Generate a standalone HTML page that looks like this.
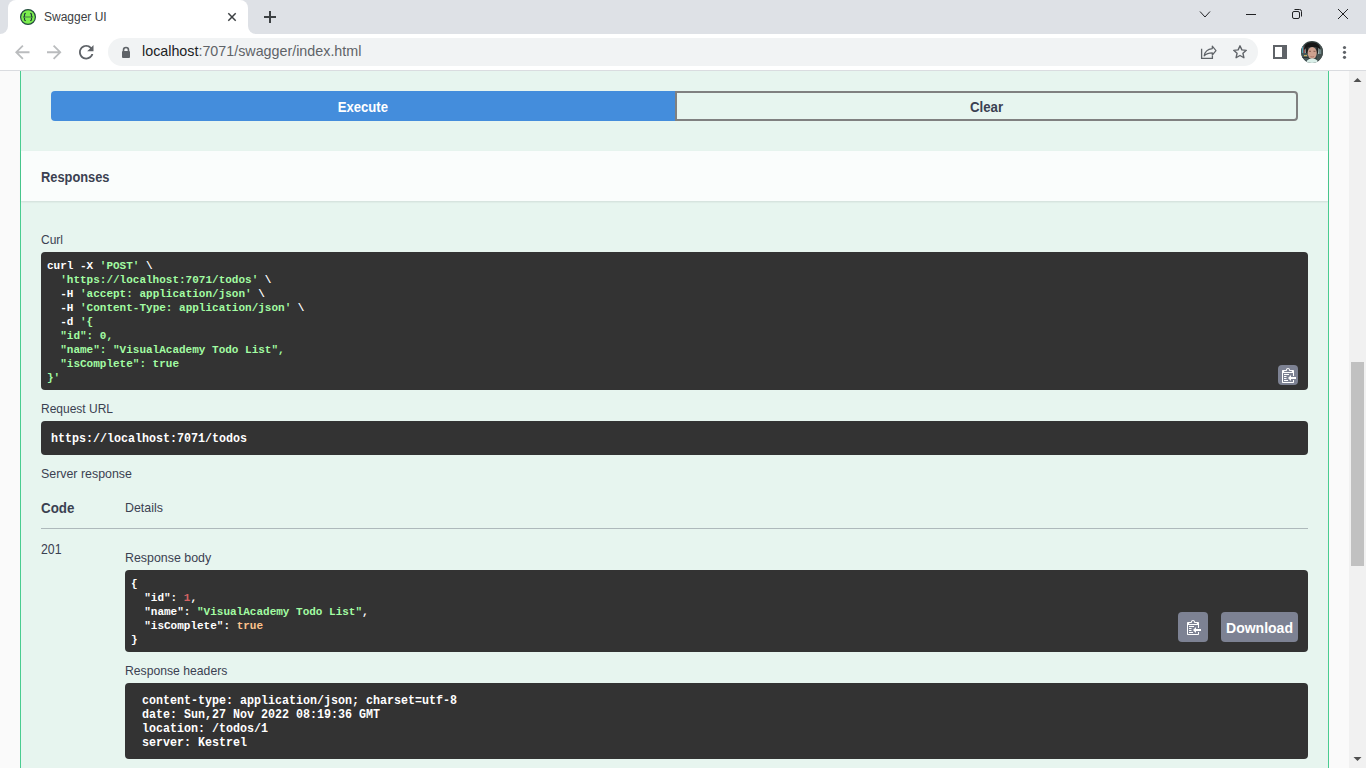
<!DOCTYPE html>
<html><head><meta charset="utf-8"><title>Swagger UI</title>
<style>
*{box-sizing:border-box;margin:0;padding:0}
html,body{width:1366px;height:768px;overflow:hidden;background:#fff;font-family:"Liberation Sans",sans-serif}
.a{position:absolute}
#tabstrip{left:0;top:0;width:1366px;height:34px;background:#dee1e6}
#tab{left:8px;top:0;width:240px;height:34px;background:#fff;border-radius:8px 8px 0 0}
.cc{width:8px;height:8px;top:26px;background:#fff}
.cc i{position:absolute;left:0;top:0;width:8px;height:8px;background:#dee1e6}
#toolbar{left:0;top:34px;width:1366px;height:36px;background:#fff}
#tbline{left:0;top:70px;width:1366px;height:1px;background:#dadce0}
#omni{left:108px;top:38px;width:1150px;height:28px;border-radius:14px;background:#f1f3f4}
#url{left:142px;top:43px;font-size:14.3px;line-height:17px;color:#5f6368;white-space:pre}
#url b{font-weight:normal;color:#202124}
#view{left:0;top:71px;width:1349px;height:697px;background:#fafafa;overflow:hidden}
#sbar{left:1349px;top:71px;width:17px;height:697px;background:#f1f1f1}
#thumb{left:1351px;top:362px;width:13px;height:204px;background:#c1c1c1}
#opblock{left:20px;top:-20px;width:1309px;height:800px;border:1px solid #49cc90;background:rgba(73,204,144,.1)}
.t{color:#3b4151;white-space:pre;line-height:1}
.btn{height:30px;font-weight:bold;font-size:14px;text-align:center;line-height:30px}
pre.code{background:#333;border-radius:4px;color:#fff;font-family:"Liberation Mono",monospace;font-weight:bold;white-space:pre;overflow:hidden}
.gul span{display:inline-block;transform:scaleX(.864);transform-origin:0 0}
.s{color:#a2fca2}.n{color:#d36363}.l{color:#fcc28c}
.lbl{font-size:14px;font-weight:bold;line-height:1;text-align:center;white-space:pre}.lbl span{display:inline-block}
.copy{background:#7d8293;border-radius:4px}
</style></head><body>
<!-- browser chrome -->
<div id="tabstrip" class="a"></div>
<div id="tab" class="a"></div>
<div class="a cc" style="left:0"><i style="border-bottom-right-radius:8px"></i></div>
<div class="a cc" style="left:248px"><i style="border-bottom-left-radius:8px"></i></div>
<svg class="a" style="left:20px;top:9px" width="16" height="16" viewBox="0 0 16 16"><circle cx="8" cy="8" r="7.4" fill="#7cee4e" stroke="#234a3f" stroke-width="1.2"/><path d="M5 8H11" stroke="#5aa84a" stroke-width="1.7"/><path d="M5.8 4.3C4.8 4.3 4.5 4.8 4.5 5.6V7C4.5 7.6 4.1 7.9 3.4 8 4.1 8.1 4.5 8.4 4.5 9V10.4C4.5 11.2 4.8 11.6 5.8 11.6M10.2 4.3C11.2 4.3 11.5 4.8 11.5 5.6V7C11.5 7.6 11.9 7.9 12.6 8 11.9 8.1 11.5 8.4 11.5 9V10.4C11.5 11.2 11.2 11.6 10.2 11.6" fill="none" stroke="#1f3f3a" stroke-width="1.2"/></svg>
<div class="a" style="left:44px;top:10px;font-size:12px;line-height:14px;color:#3c4043;white-space:pre">Swagger UI</div>
<svg class="a" style="left:227px;top:12px" width="10" height="10" viewBox="0 0 10 10"><path d="M1.3 1.3L8.7 8.7M8.7 1.3L1.3 8.7" stroke="#3c4043" stroke-width="1.5"/></svg>
<svg class="a" style="left:263px;top:10px" width="14" height="14" viewBox="0 0 14 14"><path d="M7 1v12M1 7h12" stroke="#3c4043" stroke-width="2"/></svg>
<svg class="a" style="left:1199px;top:10px" width="12" height="9" viewBox="0 0 12 9"><path d="M1 1.5l5 5.5 5-5.5" fill="none" stroke="#202124" stroke-width="1"/></svg>
<svg class="a" style="left:1245px;top:9px" width="12" height="10"><path d="M1 5.5h10" stroke="#202124" stroke-width="1"/></svg>
<svg class="a" style="left:1291px;top:8px" width="12" height="12" viewBox="0 0 12 12"><rect x="1.5" y="3.5" width="7" height="7" rx="1.5" fill="none" stroke="#202124"/><path d="M3.5 1.5h5a2 2 0 0 1 2 2v5" fill="none" stroke="#202124"/></svg>
<svg class="a" style="left:1337px;top:8px" width="12" height="12" viewBox="0 0 12 12"><path d="M1 1l10 10M11 1L1 11" stroke="#202124" stroke-width="1"/></svg>
<div id="toolbar" class="a"></div>
<svg class="a" style="left:15px;top:45px" width="14.5" height="14.5" viewBox="4 4 16 16"><path d="M20 11H7.83l5.59-5.59L12 4l-8 8 8 8 1.41-1.41L7.83 13H20v-2z" fill="#babcbe"/></svg>
<svg class="a" style="left:47px;top:45px" width="14.5" height="14.5" viewBox="4 4 16 16"><path d="M4 11h12.17l-5.59-5.59L12 4l8 8-8 8-1.41-1.41L16.17 13H4v-2z" fill="#babcbe"/></svg>
<svg class="a" style="left:79px;top:45px" width="14.5" height="14.5" viewBox="4 4 16 16"><path d="M17.65 6.35C16.2 4.9 14.21 4 12 4c-4.42 0-7.99 3.58-7.99 8s3.57 8 7.99 8c3.73 0 6.84-2.55 7.730-6h-2.08c-.82 2.33-3.04 4-5.65 4-3.310 0-6-2.69-6-6s2.69-6 6-6c1.66 0 3.14.69 4.22 1.78L13 11h7V4l-2.35 2.35z" fill="#5f6368"/></svg>
<div id="omni" class="a"></div>
<svg class="a" style="left:121px;top:46px" width="10" height="13" viewBox="0 0 10 13"><path d="M2.5 5.5V4a2.5 2.5 0 0 1 5 0v1.5" fill="none" stroke="#5f6368" stroke-width="1.6"/><rect x="1" y="5" width="8" height="7" rx="1" fill="#5f6368"/></svg>
<div id="url" class="a"><b>localhost</b>:7071/swagger/index.html</div>
<svg class="a" style="left:1200px;top:45px" width="17" height="15" viewBox="0 0 17 15"><path d="M1.6 3.8V13.4H12.4V10.8" fill="none" stroke="#5f6368" stroke-width="1.3"/><path d="M12.3 1.2L16 5.6 12.3 10V7.8C8.6 7.8 6.2 8.8 4.2 10.8 4.8 6.8 7.6 4.2 12.3 3.6z" fill="none" stroke="#5f6368" stroke-width="1.2" stroke-linejoin="round"/></svg>
<svg class="a" style="left:1232px;top:44px" width="16" height="16" viewBox="0 0 16 16"><path d="M8 1.8l1.85 4.1 4.45.45-3.35 3 .95 4.4L8 11.5l-3.9 2.25.95-4.4-3.35-3 4.45-.45z" fill="none" stroke="#5f6368" stroke-width="1.4" stroke-linejoin="round"/></svg>
<svg class="a" style="left:1273px;top:45px" width="14" height="14" viewBox="0 0 14 14"><rect x="1" y="1" width="12" height="12" fill="none" stroke="#5f6368" stroke-width="2"/><rect x="9" y="1" width="4" height="12" fill="#5f6368"/></svg>
<svg class="a" style="left:1301px;top:41px" width="22" height="22" viewBox="0 0 22 22"><defs><clipPath id="cp"><circle cx="11" cy="11" r="11"/></clipPath></defs><g clip-path="url(#cp)"><rect width="22" height="22" fill="#34403f"/><rect x="0" y="5" width="7" height="17" fill="#46575a"/><rect x="1" y="6" width="1.2" height="6" fill="#4aa6b5"/><rect x="2.6" y="6" width="1.2" height="6" fill="#b05050"/><rect x="4.2" y="7" width="1.2" height="5" fill="#9ab8b8"/><rect x="3" y="14" width="3" height="1.2" fill="#c8b060"/><rect x="0" y="16" width="7" height="1" fill="#2a3030"/><rect x="16" y="5" width="6" height="17" fill="#45504f"/><rect x="17" y="7" width="1.5" height="6" fill="#9fb5b5"/><rect x="19" y="8" width="1.2" height="5" fill="#6d8585"/><path d="M3 9C3 3 7 1.5 11 1.5S19 3 19.5 9C18 6.5 16 6 11 6S5 7 3 9z" fill="#161616"/><path d="M4.5 6.5L7 5.5 7 13 5 12zM17.5 6.5L15.5 5.5 15.5 13 17 12z" fill="#1e1e1e"/><ellipse cx="11.2" cy="12" rx="4.6" ry="6" fill="#cfa18f"/><path d="M8 10.3h2M12.5 10.3h2" stroke="#7a5548" stroke-width=".9"/><path d="M9.5 15.5q1.7 1 3.4 0" stroke="#a06a60" stroke-width=".8" fill="none"/><path d="M5 22c1-3.5 3.5-4.5 6.2-4.5s5.2 1 6.3 4.5z" fill="#d9eee8"/></g></svg>
<svg class="a" style="left:1342px;top:45px" width="5" height="15" viewBox="0 0 5 15"><circle cx="2.5" cy="2.5" r="1.6" fill="#5f6368"/><circle cx="2.5" cy="7.3" r="1.6" fill="#5f6368"/><circle cx="2.5" cy="12.3" r="1.6" fill="#5f6368"/></svg>
<div id="tbline" class="a"></div>

<!-- page viewport -->
<div id="view" class="a">
 <div id="opblock" class="a"></div>
</div>

<!-- page content -->
<div class="a" style="left:51px;top:91px;width:624px;height:30px;background:#448ddc;border-radius:4px 0 0 4px"></div><div class="a lbl" style="left:51px;top:100px;width:624px;color:#fff"><span style="transform:scaleX(.937)">Execute</span></div>
<div class="a" style="left:675px;top:91px;width:623px;height:30px;border:2px solid #808080;border-radius:0 4px 4px 0"></div><div class="a lbl" style="left:675px;top:100px;width:623px;color:#3b4151"><span style="transform:scaleX(.946)">Clear</span></div>
<div class="a" style="left:21px;top:151px;width:1307px;height:50px;background:rgba(255,255,255,.8);box-shadow:0 1px 2px rgba(0,0,0,.1)"></div>
<div class="a t" style="left:41px;top:170px;font-size:14px;font-weight:bold;transform:scaleX(.917);transform-origin:0 0">Responses</div>
<div class="a t" style="left:41px;top:234px;font-size:12px">Curl</div>
<pre class="a code" style="left:41px;top:252px;width:1267px;height:138px;padding:7px 6px 5px;font-size:11px;line-height:14px">curl -X <span class="s">'POST'</span> \
  <span class="s">'https://localhost:7071/todos'</span> \
  -H <span class="s">'accept: application/json'</span> \
  -H <span class="s">'Content-Type: application/json'</span> \
  -d <span class="s">'{
  "id": 0,
  "name": "VisualAcademy Todo List",
  "isComplete": true
}'</span></pre>
<div class="a copy" style="left:1278px;top:365px;width:20px;height:20px"><svg class="a" style="left:2px;top:3px" width="16" height="15" viewBox="0 0 16 15"><g transform="translate(2 -1)"><path fill="#fff" fill-rule="evenodd" d="M2 13h4v1H2v-1zm5-6H2v1h5V7zm2 3V8l-3 3 3 3v-2h5v-2H9zM4.5 9H2v1h2.5V9zM2 12h2.5v-1H2v1zm9 1h1v2c-.02.28-.11.52-.3.7-.19.18-.42.28-.7.3H1c-.55 0-1-.45-1-1V4c0-.55.45-1 1-1h3c0-1.110.89-2 2-2 1.11 0 2 .89 2 2h3c.55 0 1 .45 1 1v5h-1V6H1v9h10v-2zM2 5h8c0-.55-.45-1-1-1H8c-.55 0-1-.45-1-1s-.45-1-1-1-1 .45-1 1-.45 1-1 1H3c-.55 0-1 .45-1 1z"/></g></svg></div>
<div class="a t" style="left:41px;top:403px;font-size:12px">Request URL</div>
<pre class="a code gul" style="left:41px;top:421px;width:1267px;height:34px;padding:11px 10px 9px;font-size:13.5px;line-height:14px"><span>https://localhost:7071/todos</span></pre>
<div class="a t" style="left:41px;top:468px;font-size:12.4px">Server response</div>
<div class="a t" style="left:41px;top:501px;font-size:14px;font-weight:bold;transform:scaleX(.954);transform-origin:0 0">Code</div>
<div class="a t" style="left:125px;top:502px;font-size:12.4px">Details</div>
<div class="a" style="left:41px;top:528px;width:1267px;height:1px;background:rgba(59,65,81,.33)"></div>
<div class="a t" style="left:41px;top:542px;font-size:14px;transform:scaleX(.88);transform-origin:0 0">201</div>
<div class="a t" style="left:125px;top:552px;font-size:12.4px">Response body</div>
<pre class="a code" style="left:125px;top:570px;width:1183px;height:82px;padding:7px 6px 5px;font-size:11px;line-height:14px">{
  "id": <span class="n">1</span>,
  "name": <span class="s">"VisualAcademy Todo List"</span>,
  "isComplete": <span class="l">true</span>
}</pre>
<div class="a copy" style="left:1178px;top:612px;width:30px;height:30px"><svg class="a" style="left:7px;top:8px" width="16" height="15" viewBox="0 0 16 15"><g transform="translate(2 -1)"><path fill="#fff" fill-rule="evenodd" d="M2 13h4v1H2v-1zm5-6H2v1h5V7zm2 3V8l-3 3 3 3v-2h5v-2H9zM4.5 9H2v1h2.5V9zM2 12h2.5v-1H2v1zm9 1h1v2c-.02.28-.11.52-.3.7-.19.18-.42.28-.7.3H1c-.55 0-1-.45-1-1V4c0-.55.45-1 1-1h3c0-1.110.89-2 2-2 1.11 0 2 .89 2 2h3c.55 0 1 .45 1 1v5h-1V6H1v9h10v-2zM2 5h8c0-.55-.45-1-1-1H8c-.55 0-1-.45-1-1s-.45-1-1-1-1 .45-1 1-.45 1-1 1H3c-.55 0-1 .45-1 1z"/></g></svg></div>
<div class="a copy" style="left:1221px;top:612px;width:77px;height:30px"></div><div class="a lbl" style="left:1221px;top:621px;width:77px;color:#fff"><span>Download</span></div>
<div class="a t" style="left:125px;top:665px;font-size:12.2px">Response headers</div>
<pre class="a code gul" style="left:125px;top:683px;width:1183px;height:76px;padding:11px 10px 9px;font-size:13.5px;line-height:14px"><span> content-type: application/json; charset=utf-8 
 date: Sun,27 Nov 2022 08:19:36 GMT 
 location: /todos/1 
 server: Kestrel </span></pre>
<div id="sbar" class="a"></div>
<svg class="a" style="left:1352px;top:77px" width="11" height="6" viewBox="0 0 11 6"><path d="M1.5 5L5.5 1 9.5 5z" fill="#505050"/></svg>
<div id="thumb" class="a"></div>
<svg class="a" style="left:1352px;top:756px" width="11" height="6" viewBox="0 0 11 6"><path d="M1.5 1L5.5 5 9.5 1z" fill="#505050"/></svg>
</body></html>
